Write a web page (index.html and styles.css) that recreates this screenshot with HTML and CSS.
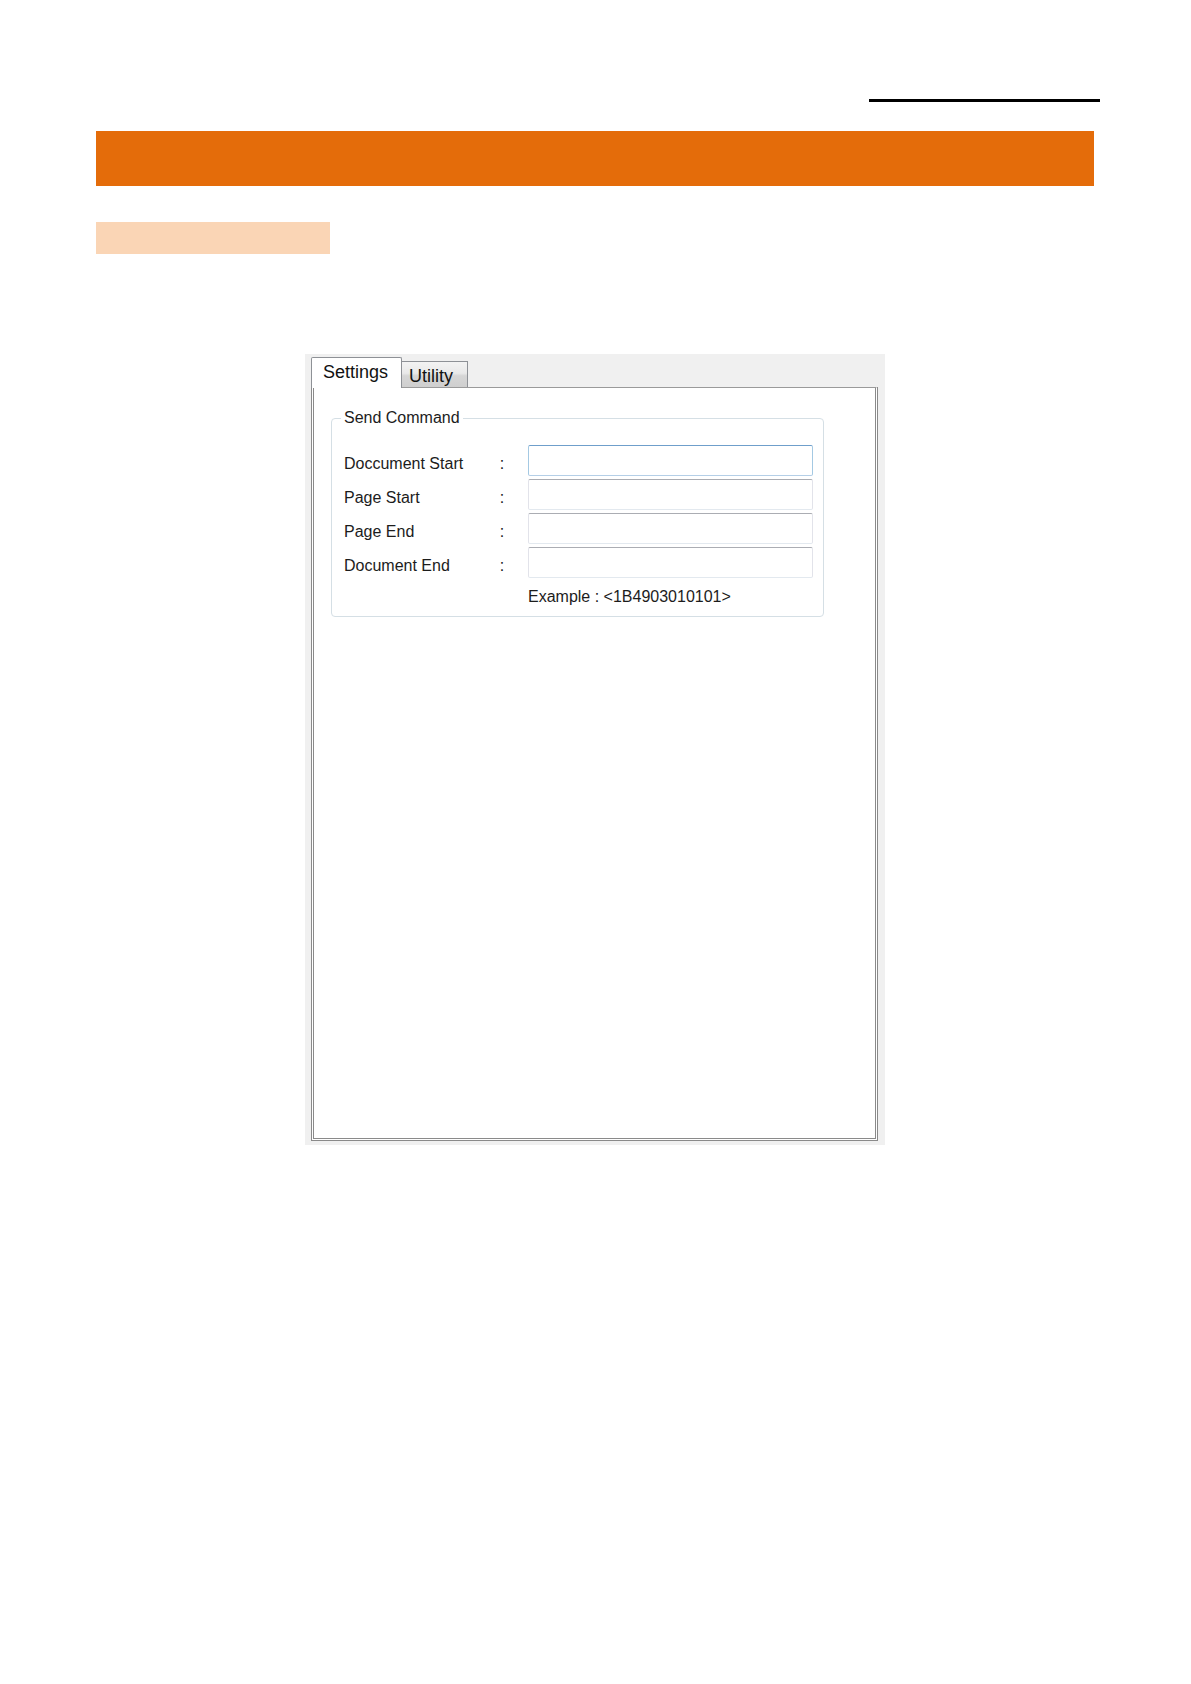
FILE: index.html
```
<!DOCTYPE html>
<html lang="en">
<head>
<meta charset="utf-8">
<title>Send Command settings</title>
<link rel="stylesheet" href="styles.css">
</head>
<body>
<div class="page">
  <div class="header-rule"></div>
  <div class="title-bar"></div>
  <div class="subtitle-bar"></div>

  <div class="dialog">
    <div class="tabs">
      <div class="tab tab-active">Settings</div>
      <div class="tab tab-inactive">Utility</div>
    </div>
    <div class="tab-panel">
      <fieldset class="group">
        <legend class="group-title">Send Command</legend>
        <div class="field-row">
          <span class="field-label">Doccument Start</span>
          <span class="field-colon">:</span>
          <span class="field-input field-input-focus"></span>
        </div>
        <div class="field-row">
          <span class="field-label">Page Start</span>
          <span class="field-colon">:</span>
          <span class="field-input"></span>
        </div>
        <div class="field-row">
          <span class="field-label">Page End</span>
          <span class="field-colon">:</span>
          <span class="field-input"></span>
        </div>
        <div class="field-row">
          <span class="field-label">Document End</span>
          <span class="field-colon">:</span>
          <span class="field-input"></span>
        </div>
        <div class="example">Example : &lt;1B4903010101&gt;</div>
      </fieldset>
    </div>
  </div>
</div>
</body>
</html>
```

FILE: styles.css
```
html, body {
  margin: 0;
  padding: 0;
  background: #ffffff;
}

body {
  font-family: "Liberation Sans", Arial, sans-serif;
  color: #1c1c1c;
}

.page {
  width: 1191px;
  min-height: 1684px;
  padding-top: 99px;
  box-sizing: border-box;
}

.header-rule {
  margin-left: 869px;
  width: 231px;
  height: 3px;
  background: #000000;
}

.title-bar {
  margin-top: 29px;
  margin-left: 96px;
  width: 998px;
  height: 55px;
  background: #e46c0a;
}

.subtitle-bar {
  margin-top: 36px;
  margin-left: 96px;
  width: 234px;
  height: 32px;
  background: #fad5b5;
}

.dialog {
  margin-top: 100px;
  margin-left: 305px;
  width: 580px;
  height: 791px;
  box-sizing: border-box;
  padding: 3px 7px 4px 6px;
  background: #f0f0f0;
  display: flex;
  flex-direction: column;
}

.tabs {
  display: flex;
  align-items: flex-end;
  height: 30px;
}

.tab {
  box-sizing: border-box;
  font-size: 18px;
  line-height: 20px;
  color: #111111;
  border: 1px solid #8e9196;
  border-bottom: none;
  white-space: nowrap;
}

.tab-active {
  position: relative;
  z-index: 2;
  height: 31px;
  margin-bottom: -1px;
  padding: 4px 13px 0 11px;
  background: #ffffff;
  border-radius: 2px 2px 0 0;
}

.tab-inactive {
  position: relative;
  z-index: 1;
  height: 26px;
  margin-left: -1px;
  padding: 4px 14px 0 7px;
  background: linear-gradient(#f3f3f3 0%, #e9e9e9 45%, #d6d6d6 55%, #cfcfcf 100%);
  border-color: #8e9196;
}

.tab-panel {
  flex: 1;
  box-sizing: border-box;
  width: 567px;
  background: #ffffff;
  border-top: 1px solid #9a9a9a;
  border-left: 3px double #8a8a8a;
  border-right: 3px double #8a8a8a;
  border-bottom: 3px double #8a8a8a;
}

.group {
  box-sizing: border-box;
  width: 493px;
  margin: 21px 0 0 17px;
  padding: 18px 10px 10px 12px;
  border: 1px solid #d5dfe5;
  border-radius: 4px;
  min-width: 0;
}

.group-title {
  margin-left: -3px;
  padding: 0 3px;
  font-size: 16px;
  line-height: 18px;
  color: #1c1c1c;
}

.field-row {
  display: flex;
  align-items: flex-start;
  height: 31px;
  margin-bottom: 3px;
  font-size: 16px;
}

.field-row:nth-of-type(4) {
  margin-bottom: 0;
}

.field-label {
  width: 156px;
  padding-top: 10px;
  line-height: 18px;
  white-space: nowrap;
}

.field-colon {
  width: 28px;
  padding-top: 10px;
  line-height: 18px;
}

.field-input {
  box-sizing: border-box;
  width: 286px;
  height: 31px;
  background: #ffffff;
  border: 1px solid #e2e3ea;
  border-top-color: #abadb3;
  border-bottom-color: #e3e9ef;
  border-radius: 2px;
}

.field-input-focus {
  border-color: #a4c9e3;
  border-top-color: #6f9fcb;
  border-bottom-color: #b5cfe7;
}

.example {
  margin-top: 10px;
  margin-left: 184px;
  font-size: 16px;
  line-height: 18px;
  white-space: nowrap;
}
```
